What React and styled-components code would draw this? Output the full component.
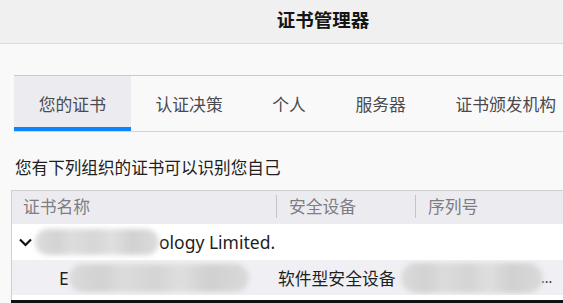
import React from 'react';
import styled, { createGlobalStyle } from 'styled-components';

const Global = createGlobalStyle`
  html, body {
    margin: 0;
    padding: 0;
    background: #f9f9fa;
    overflow: hidden;
  }
  body {
    font-family: "Noto Sans", "Noto Sans CJK SC", sans-serif;
  }
`;

const Page = styled.div`
  width: 563px;
  height: 303px;
  display: flex;
  flex-direction: column;
  overflow: hidden;
  background: #f9f9fa;
`;

const TitleBar = styled.div`
  height: 43px;
  flex-shrink: 0;
  background: #f0f0f0;
  border-bottom: 1px solid #dadada;
  display: flex;
  align-items: center;
  justify-content: center;
  padding-left: 83px;
`;

const Title = styled.h1`
  margin: 0;
  font-family: "Noto Sans CJK SC", sans-serif;
  font-size: 18.5px;
  font-weight: 700;
  color: #151515;
  line-height: 1;
  margin-top: -4px;
`;

const Body = styled.div`
  padding-left: 11px;
  flex: 1;
  display: flex;
  flex-direction: column;
  min-height: 0;
`;

const Tabs = styled.div`
  margin-top: 31px;
  margin-left: 3px;
  display: flex;
  border-top: 1px solid #c9c9cc;
  border-bottom: 1px solid #d4d4d8;
  height: 55px;
  flex-shrink: 0;
  white-space: nowrap;
`;

const Tab = styled.div`
  padding: 4px 24.8px 0;
  display: flex;
  align-items: center;
  font-family: "Noto Sans CJK SC", sans-serif;
  font-size: 16.8px;
  color: #4a4a4f;
  background: ${p => (p.active ? '#ececf0' : 'transparent')};
  border-bottom: 4px solid ${p => (p.active ? '#0a84ff' : 'transparent')};
  flex-shrink: 0;
`;

const Description = styled.p`
  margin: 25px 0 0 4px;
  font-family: "Noto Sans CJK SC", sans-serif;
  font-size: 16.6px;
  line-height: 20px;
  height: 20px;
  color: #202020;
  flex-shrink: 0;
`;

const Table = styled.div`
  margin-top: 13px;
  width: 600px;
  border-top: 1px solid #cfcfd4;
  border-left: 1px solid #cfcfd4;
  background: #fff;
  height: 109px;
  flex-shrink: 0;
`;

const Row = styled.div`
  display: grid;
  grid-template-columns: 264px 139px 1fr;
  height: ${p => p.h}px;
  background: ${p => p.bg};
  align-items: center;
  white-space: nowrap;
  overflow: hidden;
`;

const HeadCell = styled.div`
  display: flex;
  align-items: center;
  gap: 12px;
  padding-left: ${p => (p.first ? '11px' : '0')};
  font-family: "Noto Sans CJK SC", sans-serif;
  font-size: 16.8px;
  color: #7d7d82;
  padding-bottom: 3px;
`;

const Divider = styled.span`
  width: 1px;
  height: 23px;
  background: #c3c3c8;
`;

const Cell = styled.div`
  display: flex;
  align-items: center;
  padding-left: ${p => p.pad || 0}px;
  font-size: 17.5px;
  color: #1e1e1e;
  font-family: "Noto Sans", "Noto Sans CJK SC", sans-serif;
`;

const Chevron = styled.svg`
  width: 15px;
  height: 9px;
  margin-left: 6px;
  flex-shrink: 0;
`;

const Redact = styled.span`
  display: inline-block;
  width: ${p => p.w}px;
  height: ${p => p.h}px;
  margin-left: ${p => p.ml || 0}px;
  border-radius: ${p => p.h / 2}px;
  background: linear-gradient(
    90deg,
    #d9d9d9 0%, #cfcfcf 18%, #dadada 30%, #d2d2d2 48%,
    #dddddd 62%, #cdcdcd 78%, #d8d8d8 100%
  );
  filter: blur(2.5px);
  opacity: 0.9;
  flex-shrink: 0;
`;

const CnText = styled.span`
  font-family: "Noto Sans CJK SC", sans-serif;
  font-size: 16.8px;
`;

const Ellipsis = styled.span`
  margin-left: -2px;
  font-size: 14px;
  color: #333;
`;

const BottomEdge = styled.div`
  height: 3px;
  background: #111;
  flex-shrink: 0;
`;

const tabs = ['您的证书', '认证决策', '个人', '服务器', '证书颁发机构'];

export default function App() {
  return (
    <Page>
      <Global />
      <TitleBar>
        <Title>证书管理器</Title>
      </TitleBar>
      <Body>
        <Tabs>
          {tabs.map((t, i) => (
            <Tab key={t} active={i === 0}>{t}</Tab>
          ))}
        </Tabs>
        <Description>您有下列组织的证书可以识别您自己</Description>
        <Table>
          <Row h={33} bg="#ececf0">
            <HeadCell first>证书名称</HeadCell>
            <HeadCell><Divider />安全设备</HeadCell>
            <HeadCell><Divider />序列号</HeadCell>
          </Row>
          <Row h={36} bg="#ffffff">
            <Cell>
              <Chevron viewBox="0 0 15 9">
                <path d="M2 1.5 L7.5 7 L13 1.5" fill="none" stroke="#111" strokeWidth="2.2" />
              </Chevron>
              <Redact w={124} h={26} ml={2} />
              <span>ology Limited.</span>
            </Cell>
            <Cell />
            <Cell />
          </Row>
          <Row h={35} bg="#f0f0f4">
            <Cell pad={47}>
              E<Redact w={180} h={28} ml={0} />
            </Cell>
            <Cell pad={2}>
              <CnText>软件型安全设备</CnText>
            </Cell>
            <Cell>
              <Redact w={142} h={30} ml={-14} />
              <Ellipsis>...</Ellipsis>
            </Cell>
          </Row>
        </Table>
        <BottomEdge />
      </Body>
    </Page>
  );
}
